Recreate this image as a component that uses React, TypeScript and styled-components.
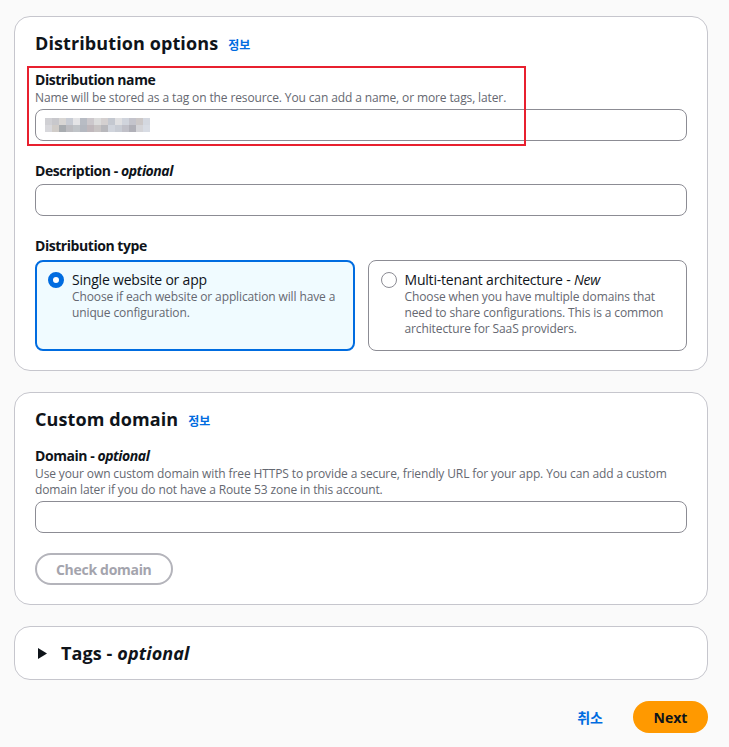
import React from 'react'
import styled, { createGlobalStyle } from 'styled-components'

const GlobalStyle = createGlobalStyle`
  html, body {
    margin: 0;
    padding: 0;
    background: #fafafa;
  }
  body {
    font-family: 'Open Sans', 'Noto Sans', 'Noto Sans CJK KR', sans-serif;
    color: #0f141a;
  }
`

const Page = styled.div`
  padding: 16px 21px 16px 14px;
  display: flex;
  flex-direction: column;
  gap: 21px;
`

const Container = styled.section<{ $compact?: boolean }>`
  background: #fff;
  border: 1px solid #c6c6cd;
  border-radius: 16px;
  padding: ${(p) => (p.$compact ? '15px 20px' : '15px 20px 19px 20px')};
  display: flex;
  flex-direction: column;
`

const Header = styled.div`
  display: flex;
  align-items: baseline;
  gap: 10px;
  margin-bottom: 17px;
`

const Title = styled.h2`
  margin: 0;
  font-size: 18px;
  line-height: 22px;
  font-weight: 700;
  letter-spacing: 0.1px;
  em {
    font-style: italic;
    font-weight: 700;
  }
`

const InfoLink = styled.a`
  font-family: 'Noto Sans CJK KR', sans-serif;
  font-size: 12px;
  font-weight: 700;
  color: #006ce0;
  text-decoration: none;
`

const Field = styled.div`
  position: relative;
  display: flex;
  flex-direction: column;
  & + & {
    margin-top: 21px;
  }
`

const Label = styled.label`
  font-size: 14px;
  line-height: 18px;
  padding-bottom: 1px;
  font-weight: 700;
  letter-spacing: -0.45px;
  em {
    font-style: italic;
  }
`

const Hint = styled.div`
  font-size: 12px;
  line-height: 16px;
  color: #656871;
  letter-spacing: -0.12px;
`

const InputBox = styled.div`
  margin-top: 3px;
  height: 30px;
  border: 1px solid #8c8c94;
  border-radius: 8px;
  background: #fff;
  display: flex;
  align-items: center;
  padding: 0 9px;
`

const Highlight = styled.div`
  position: absolute;
  left: -8px;
  top: -5px;
  width: 495px;
  height: 76px;
  border: 2px solid #e8202f;
  pointer-events: none;
`

const Tiles = styled.div`
  display: grid;
  grid-template-columns: 1fr 1fr;
  gap: 13px;
  margin-top: 4px;
`

const Tile = styled.div<{ $checked?: boolean }>`
  display: flex;
  gap: 8px;
  border-radius: 8px;
  min-height: 90px;
  box-sizing: border-box;
  ${(p) =>
    p.$checked
      ? `border: 2px solid #006ce0; background: #f0fbff; padding: 10px 11px 12px 11px;`
      : `border: 1px solid #8c8c94; background: #fff; padding: 11px 12px 13px 12px;`}
`

const Radio = styled.span<{ $checked?: boolean }>`
  flex: none;
  width: 16px;
  height: 16px;
  border-radius: 50%;
  box-sizing: border-box;
  background: #fff;
  border: ${(p) => (p.$checked ? '5px solid #006ce0' : '1.5px solid #8c8c94')};
`

const TileText = styled.div`
  display: flex;
  flex-direction: column;
`

const TileTitle = styled.div`
  font-size: 14px;
  line-height: 18px;
  margin-top: -1px;
  letter-spacing: -0.2px;
  em {
    font-style: italic;
  }
`

const OutlineButton = styled.button`
  align-self: flex-start;
  margin-top: 20px;
  height: 32px;
  padding: 0 19px;
  border: 2px solid #b4b4bb;
  border-radius: 16px;
  background: #fff;
  color: #a4a4ad;
  font-family: 'Open Sans', 'Noto Sans', sans-serif;
  font-size: 14px;
  font-weight: 700;
  letter-spacing: -0.3px;
`

const Expander = styled.div`
  display: flex;
  align-items: center;
  gap: 14px;
  padding-left: 3px;
`

const Footer = styled.div`
  display: flex;
  justify-content: flex-end;
  align-items: center;
  gap: 10px;
`

const LinkButton = styled.button`
  height: 32px;
  border: none;
  background: none;
  padding: 0 20px;
  font-family: 'Noto Sans CJK KR', sans-serif;
  font-size: 14px;
  line-height: 32px;
  font-weight: 700;
  color: #006ce0;
`

const PrimaryButton = styled.button`
  height: 32px;
  width: 75px;
  border: none;
  border-radius: 16px;
  background: #ff9900;
  color: #0f141a;
  font-family: 'Open Sans', 'Noto Sans', sans-serif;
  font-size: 14px;
  font-weight: 700;
`

const mosaic = [
  ['#d0d0d4', '#c8c8cc', '#d8d6d4', '#c8ccd4', '#e4e4e6', '#b8bcc4', '#ccc8cc', '#dcdcdc', '#d4d0d0', '#c4c8d0', '#e0e0e2', '#d0d4dc', '#c4c4cc', '#ccc8c8', '#d4d8e0'],
  ['#d8d8dc', '#d0ccc8', '#a8acb0', '#bcbcc0', '#c0c4c8', '#b4b8c0', '#c0b8bc', '#c8c4c4', '#b8b8bc', '#d0d4dc', '#c8ccd4', '#c0c0c8', '#b0b0b8', '#d4d4d8', '#d8dce4'],
]

const Blurred = () => (
  <svg width="105" height="14" viewBox="0 0 105 14">
    {mosaic.map((row, r) =>
      row.map((c, i) => (
        <rect key={`${r}-${i}`} x={i * 7} y={r * 7} width="7" height="7" fill={c} />
      ))
    )}
  </svg>
)

const Caret = () => (
  <svg width="9" height="11" viewBox="0 0 9 11">
    <path d="M0 0 L9 5.5 L0 11 Z" fill="#0f141a" />
  </svg>
)

const App = () => {
  return (
    <>
      <GlobalStyle />
      <Page>
        <Container>
          <Header>
            <Title>Distribution options</Title>
            <InfoLink href="#">정보</InfoLink>
          </Header>
          <Field>
            <Highlight />
            <Label>Distribution name</Label>
            <Hint>
              Name will be stored as a tag on the resource. You can add a name,
              or more tags, later.
            </Hint>
            <InputBox>
              <Blurred />
            </InputBox>
          </Field>
          <Field>
            <Label>
              Description - <em>optional</em>
            </Label>
            <InputBox />
          </Field>
          <Field>
            <Label>Distribution type</Label>
            <Tiles>
              <Tile $checked>
                <Radio $checked />
                <TileText>
                  <TileTitle>Single website or app</TileTitle>
                  <Hint>
                    Choose if each website or application will have a unique
                    configuration.
                  </Hint>
                </TileText>
              </Tile>
              <Tile>
                <Radio />
                <TileText>
                  <TileTitle>
                    Multi-tenant architecture - <em>New</em>
                  </TileTitle>
                  <Hint>
                    Choose when you have multiple domains that need to share
                    configurations. This is a common architecture for SaaS
                    providers.
                  </Hint>
                </TileText>
              </Tile>
            </Tiles>
          </Field>
        </Container>

        <Container>
          <Header>
            <Title>Custom domain</Title>
            <InfoLink href="#">정보</InfoLink>
          </Header>
          <Field>
            <Label>
              Domain - <em>optional</em>
            </Label>
            <Hint>
              Use your own custom domain with free HTTPS to provide a secure,
              friendly URL for your app. You can add a custom domain later if
              you do not have a Route 53 zone in this account.
            </Hint>
            <InputBox />
          </Field>
          <OutlineButton>Check domain</OutlineButton>
        </Container>

        <Container $compact>
          <Expander>
            <Caret />
            <Title>
              Tags - <em>optional</em>
            </Title>
          </Expander>
        </Container>

        <Footer>
          <LinkButton>취소</LinkButton>
          <PrimaryButton>Next</PrimaryButton>
        </Footer>
      </Page>
    </>
  )
}

export default App
